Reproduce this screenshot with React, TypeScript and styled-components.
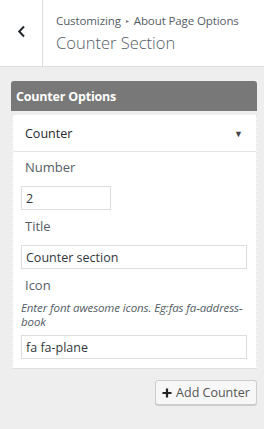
import React from "react";
import styled, { createGlobalStyle } from "styled-components";

const Global = createGlobalStyle`
  html, body { margin: 0; padding: 0; background: #eeeeee; overflow: hidden; }
  body { font-family: "Open Sans", "Noto Sans", sans-serif; }
  * { box-sizing: border-box; }
`;

const Page = styled.div`
  width: 264px;
  height: 429px;
  background: #eeeeee;
`;

const Header = styled.div`
  display: flex;
  height: 67px;
  background: #fff;
  border-bottom: 1px solid #dddddd;
`;

const BackButton = styled.div`
  width: 43px;
  border-right: 1px solid #dddddd;
  display: flex;
  align-items: center;
  justify-content: center;
  color: #555d66;
  padding-bottom: 3px;
`;

const TitleBox = styled.div`
  display: flex;
  flex-direction: column;
  padding: 12px 0 0 13px;
  color: #555d66;
`;

const Crumb = styled.div`
  font-size: 11.5px;
  line-height: 18px;
  letter-spacing: -0.1px;
  display: flex;
  align-items: center;
  gap: 5px;
`;

const Sep = styled.span`
  font-size: 6px;
  color: #777;
`;

const Title = styled.div`
  font-size: 16.5px;
  font-weight: 300;
  line-height: 26px;
  color: #555d66;
`;

const Content = styled.div`
  padding: 14px 7px 0 11px;
  display: flex;
  flex-direction: column;
`;

const SectionBar = styled.div`
  height: 30px;
  background: #787878;
  border-radius: 3px 3px 0 0;
  color: #fff;
  font-weight: 700;
  font-size: 12.5px;
  letter-spacing: -0.2px;
  display: flex;
  align-items: center;
  padding-left: 5px;
`;

const Card = styled.div`
  margin: 4px 0 0 1px;
  background: #fff;
  border-left: 1px dotted #e2e2e2;
  border-right: 1px dotted #e2e2e2;
  border-bottom: 1px solid #e0e0e0;
`;

const CardHead = styled.div`
  height: 37px;
  border-bottom: 1px solid #e5e5e5;
  display: flex;
  align-items: center;
  justify-content: space-between;
  padding: 0 13px 0 12px;
  font-size: 12.5px;
  color: #23282d;
`;

const Arrow = styled.span`
  font-size: 9px;
  color: #444;
`;

const CardBody = styled.div`
  padding: 5px 9px 9px 8px;
  display: flex;
  flex-direction: column;
`;

const Label = styled.div<{ $mb?: number }>`
  font-size: 13px;
  line-height: 20px;
  color: #555d66;
  padding-left: 4px;
  margin-bottom: ${(p) => p.$mb ?? 9}px;
`;

const Desc = styled.div`
  font-size: 11.5px;
  font-style: italic;
  line-height: 14px;
  color: #555d66;
  margin: 0 0 6px 0;
  letter-spacing: -0.1px;
`;

const Input = styled.input<{ $w?: number }>`
  width: ${(p) => (p.$w ? `${p.$w}px` : "100%")};
  height: 24px;
  border: 1px solid #dddddd;
  font-family: "Open Sans", "Noto Sans", sans-serif;
  font-size: 12.5px;
  color: #32373c;
  padding: 0 4px;
  margin-bottom: 6px;
  outline: none;
  &:last-child { margin-bottom: 0; }
`;

const Footer = styled.div`
  display: flex;
  justify-content: flex-end;
  margin-top: 11px;
`;

const Button = styled.button`
  height: 25px;
  width: 102px;
  border: 1px solid #cccccc;
  border-radius: 3px;
  background: #f7f7f7;
  box-shadow: 0 1px 0 #cccccc;
  color: #555;
  font-family: "Open Sans", "Noto Sans", sans-serif;
  font-size: 12.5px;
  display: flex;
  align-items: center;
  justify-content: center;
  gap: 4px;
  padding: 0;
`;

export default function App() {
  return (
    <Page>
      <Global />
      <Header>
        <BackButton>
          <svg width="9" height="13" viewBox="0 0 9 13">
            <path d="M7 1.5 L2.2 6.5 L7 11.5" fill="none" stroke="#23282d" strokeWidth="2" />
          </svg>
        </BackButton>
        <TitleBox>
          <Crumb>
            <span>Customizing</span>
            <Sep>▸</Sep>
            <span>About Page Options</span>
          </Crumb>
          <Title>Counter Section</Title>
        </TitleBox>
      </Header>
      <Content>
        <SectionBar>Counter Options</SectionBar>
        <Card>
          <CardHead>
            <span>Counter</span>
            <Arrow>▼</Arrow>
          </CardHead>
          <CardBody>
            <Label>Number</Label>
            <Input $w={90} defaultValue="2" />
            <Label>Title</Label>
            <Input defaultValue="Counter section" />
            <Label $mb={6}>Icon</Label>
            <Desc>Enter font awesome icons. Eg:fas fa-address-book</Desc>
            <Input defaultValue="fa fa-plane" />
          </CardBody>
        </Card>
        <Footer>
          <Button>
            <svg width="10" height="10" viewBox="0 0 10 10">
              <path d="M5 0.5 V9.5 M0.5 5 H9.5" stroke="#222" strokeWidth="2.2" />
            </svg>
            Add Counter
          </Button>
        </Footer>
      </Content>
    </Page>
  );
}
